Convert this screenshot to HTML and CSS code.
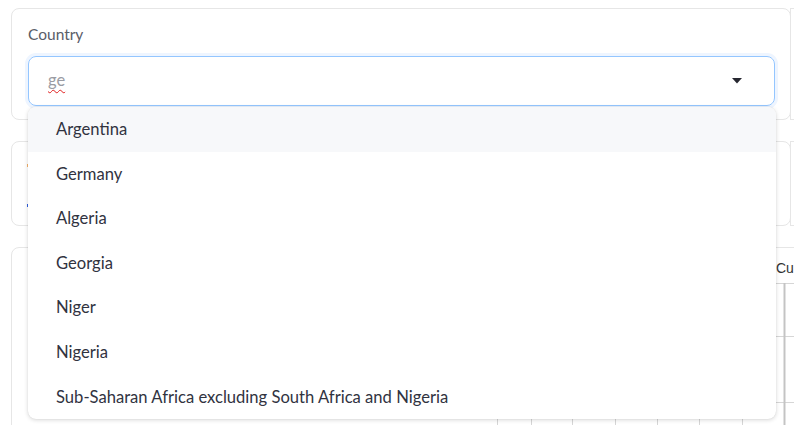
FILE: index.html
```html
<!DOCTYPE html>
<html>
<head>
<meta charset="utf-8">
<link rel="stylesheet" href="styles.css">
</head>
<body>
<div class="page">
  <div class="row">
    <div class="card card1">
      <div class="label">Country</div>
      <div class="select-wrap">
        <div class="select">
          <span class="query">ge</span>
          <svg class="caret" width="10" height="6" viewBox="0 0 10 6"><path d="M0 0H10L5 5.5Z" fill="#262730"/></svg>
        </div>
        <ul class="menu">
          <li class="active">Argentina</li>
          <li>Germany</li>
          <li>Algeria</li>
          <li>Georgia</li>
          <li>Niger</li>
          <li>Nigeria</li>
          <li>Sub-Saharan Africa excluding South Africa and Nigeria</li>
        </ul>
      </div>
    </div>
    <div class="card stub stub1"></div>
  </div>
  <div class="row">
    <div class="card card2">
      <span class="dot orange"></span>
      <span class="dot blue"></span>
    </div>
    <div class="card stub stub2"></div>
  </div>
  <div class="card card3">
    <div class="legend">Currency</div>
    <svg class="grid" width="420" height="180" viewBox="0 0 420 180">
      <g stroke="#d6d6d6" stroke-width="1">
        <line x1="0" y1="36.5" x2="420" y2="36.5"/>
        <line x1="0" y1="89.5" x2="420" y2="89.5"/>
        <line x1="0" y1="155.5" x2="420" y2="155.5"/>
        <line x1="96.5" y1="36" x2="96.5" y2="180"/>
        <line x1="130.5" y1="36" x2="130.5" y2="180"/>
        <line x1="171.5" y1="36" x2="171.5" y2="180"/>
        <line x1="214.5" y1="36" x2="214.5" y2="180"/>
        <line x1="256.5" y1="36" x2="256.5" y2="180"/>
        <line x1="298.5" y1="36" x2="298.5" y2="180"/>
        <line x1="341.5" y1="36" x2="341.5" y2="180"/>
      </g>
      <line x1="383.5" y1="36" x2="383.5" y2="180" stroke="#c4c4c4" stroke-width="2"/>
    </svg>
  </div>
</div>
</body>
</html>
```
FILE: styles.css
```css
html, body {
  margin: 0;
  padding: 0;
  background: #ffffff;
  overflow: hidden;
  width: 794px;
  height: 425px;
}
body {
  font-family: "Lato", "Source Sans Pro", "Noto Sans", sans-serif;
  color: #31333f;
}
.page {
  padding: 8px 0 0 11px;
  display: flex;
  flex-direction: column;
  gap: 21px;
  overflow: hidden;
  width: 783px;
  height: 417px;
}
.row {
  display: flex;
}
.card {
  box-sizing: border-box;
  border: 1px solid #e6e6e6;
  border-radius: 8px;
  background: #fff;
  flex-shrink: 0;
}
.card1 {
  width: 780px;
  height: 112px;
  padding: 13px 16px 0 16px;
  position: relative;
  z-index: 2;
}
.stub {
  width: 40px;
  border-radius: 0;
  border-right: none;
  margin-left: -1px;
}
.stub1 { height: 112px; }
.stub2 { height: 85px; }
.label {
  font-size: 15.5px;
  line-height: 24px;
  color: #5a5d68;
  height: 34px;
}
.select-wrap {
  position: relative;
}
.select {
  box-sizing: border-box;
  height: 50px;
  width: 747px;
  border: 1px solid #94c6ff;
  border-radius: 8px;
  box-shadow: 0 0 0 3px #eef5ff;
  display: flex;
  align-items: center;
  justify-content: space-between;
  padding: 0 32px 0 19px;
}
.query {
  font-size: 16.5px;
  color: #9a9ca3;
  text-decoration: underline wavy #e02020;
  text-decoration-thickness: 1px;
  text-underline-offset: 3px;
  margin-top: -2px;
}
.caret {
  display: block;
}
.menu {
  position: absolute;
  top: 51px;
  left: 0;
  width: 748px;
  margin: 0;
  padding: 0;
  list-style: none;
  background: #fff;
  border-radius: 8px;
  box-shadow: 0 1px 4px rgba(0,0,0,0.16), 0 0 1px rgba(0,0,0,0.12);
  overflow: hidden;
}
.menu li {
  height: 44.6px;
  line-height: 44.6px;
  padding-left: 28px;
  font-size: 16.6px;
  color: #31333f;
  white-space: nowrap;
}
.menu li.active {
  background: #f7f8fa;
}
.card2 {
  width: 780px;
  height: 85px;
  position: relative;
}
.dot {
  position: absolute;
  left: 15px;
  width: 2px;
  height: 3px;
}
.orange { top: 22px; background: #f6b26b; }
.blue { top: 62px; background: #2f5fe0; }
.card3 {
  width: 900px;
  height: 200px;
  position: relative;
}
.legend {
  position: absolute;
  left: 764px;
  top: 12px;
  font-family: "Liberation Sans", Arial, sans-serif;
  font-size: 14px;
  color: #333;
  white-space: nowrap;
}
.grid {
  position: absolute;
  left: 389px;
  top: -1px;
}
```
